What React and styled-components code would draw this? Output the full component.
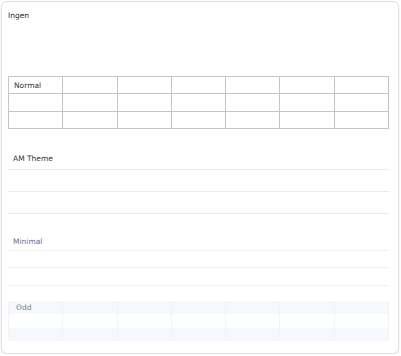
import React from 'react';
import styled, { createGlobalStyle } from 'styled-components';

const GlobalStyle = createGlobalStyle`
  html, body {
    margin: 0;
    padding: 0;
    background: #ffffff;
  }
  body {
    font-family: 'DejaVu Sans', Verdana, sans-serif;
  }
`;

const Card = styled.div`
  box-sizing: border-box;
  width: 398px;
  height: 353px;
  margin: 1px 0 0 1px;
  padding: 5px 10px 0 6px;
  border: 1px solid #e0e0e0;
  border-radius: 6px;
  box-shadow: 0 1px 2px rgba(0, 0, 0, 0.08);
  background: #fff;
`;

const Section = styled.div`
  margin-bottom: ${(p) => p.$gap}px;
`;

const Table = styled.table`
  width: 381px;
  border-collapse: collapse;
  table-layout: fixed;
  font-size: 7.5px;
  color: #333;
`;

const Cell = styled.td`
  height: ${(p) => p.$h}px;
  padding: 0 5px;
  box-sizing: border-box;
  white-space: nowrap;
  ${(p) => p.$variant === 'none' && `
    padding-left: 0;
    color: #222;
  `}
  ${(p) => p.$variant === 'normal' && `
    border: 1px solid #c4c4c4;
  `}
  ${(p) => p.$variant === 'am' && `
    border-bottom: 1px solid #e9e9e9;
  `}
  ${(p) => p.$variant === 'minimal' && `
    border-bottom: 1px solid #f1f1f1;
    color: #6b6b8c;
  `}
  ${(p) => p.$variant === 'odd' && `
    border-left: 1px solid #f0f3f7;
    border-right: 1px solid #f0f3f7;
    color: #6c7c8c;
    padding-left: 7px;
  `}
`;

const Row = styled.tr`
  background: ${(p) => (p.$striped ? '#f5f8fc' : 'transparent')};
`;

const sections = [
  { name: 'Ingen', variant: 'none', h: 17, gap: 18 },
  { name: 'Normal', variant: 'normal', h: 17.3, gap: 19 },
  { name: 'AM Theme', variant: 'am', h: 22, gap: 19 },
  { name: 'Minimal', variant: 'minimal', h: 17.3, gap: 15 },
  { name: 'Odd', variant: 'odd', h: 13.5, gap: 0 },
];

const cols = 7;

const StyledTable = ({ s }) => (
  <Section $gap={s.gap}>
    <Table>
      <tbody>
        {[0, 1, 2].map((r) => (
          <Row key={r} $striped={s.variant === 'odd' && r % 2 === 0}>
            {Array.from({ length: cols }).map((_, c) => (
              <Cell key={c} $variant={s.variant} $h={s.h}>
                {r === 0 && c === 0 ? s.name : ''}
              </Cell>
            ))}
          </Row>
        ))}
      </tbody>
    </Table>
  </Section>
);

export default function App() {
  return (
    <>
      <GlobalStyle />
      <Card>
        {sections.map((s) => (
          <StyledTable key={s.name} s={s} />
        ))}
      </Card>
    </>
  );
}
